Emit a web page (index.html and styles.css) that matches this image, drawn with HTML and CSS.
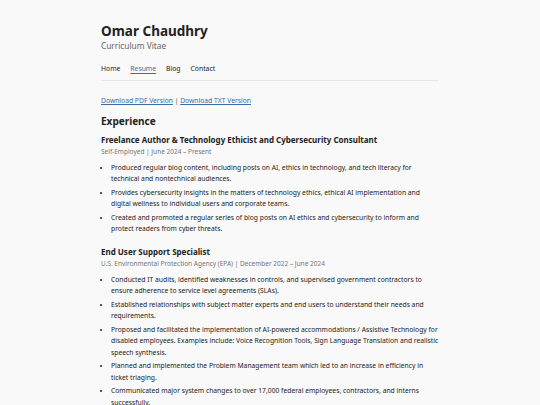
FILE: index.html
```html
<!DOCTYPE html>
<html lang="en">
<head>
    <meta charset="UTF-8">
    <meta name="viewport" content="width=device-width, initial-scale=1.0">
    <title>Resume - Omar Chaudhry</title>
    <link rel="stylesheet" href="styles.css">
</head>
<body>
    <div class="page">
        <header class="site-header">
            <h1 class="site-title">Omar Chaudhry</h1>
            <p class="site-subtitle">Curriculum Vitae</p>
            <nav class="site-nav">
                <a href="#">Home</a>
                <a href="#" class="active">Resume</a>
                <a href="#">Blog</a>
                <a href="#">Contact</a>
            </nav>
        </header>

        <main>
            <p class="downloads">
                <a href="#">Download PDF Version</a> <span class="sep">|</span> <a href="#">Download TXT Version</a>
            </p>

            <h2>Experience</h2>

            <section class="job">
                <h3>Freelance Author &amp; Technology Ethicist and Cybersecurity Consultant</h3>
                <p class="meta">Self-Employed | June 2024 – Present</p>
                <ul>
                    <li>Produced regular blog content, including posts on AI, ethics in technology, and tech literacy for technical and nontechnical audiences.</li>
                    <li>Provides cybersecurity insights in the matters of technology ethics, ethical AI implementation and digital wellness to individual users and corporate teams.</li>
                    <li>Created and promoted a regular series of blog posts on AI ethics and cybersecurity to inform and protect readers from cyber threats.</li>
                </ul>
            </section>

            <section class="job">
                <h3>End User Support Specialist</h3>
                <p class="meta">U.S. Environmental Protection Agency (EPA) | December 2022 – June 2024</p>
                <ul>
                    <li>Conducted IT audits, identified weaknesses in controls, and supervised government contractors to ensure adherence to service level agreements (SLAs).</li>
                    <li>Established relationships with subject matter experts and end users to understand their needs and requirements.</li>
                    <li>Proposed and facilitated the implementation of AI-powered accommodations / Assistive Technology for disabled employees. Examples include: Voice Recognition Tools, Sign Language Translation and realistic speech synthesis.</li>
                    <li>Planned and implemented the Problem Management team which led to an increase in efficiency in ticket triaging.</li>
                    <li>Communicated major system changes to over 17,000 federal employees, contractors, and interns successfully.</li>
                </ul>
            </section>
        </main>
    </div>
</body>
</html>
```

FILE: styles.css
```css
body {
    margin: 0;
    padding: 0;
    background-color: #f9f9f9;
    color: #222;
    font-family: "Noto Sans", sans-serif;
    font-size: 6.75px;
    line-height: 11.5px;
}

.page {
    max-width: 338px;
    margin: 0 auto;
    padding-top: 22px;
}

.site-title {
    font-size: 13.5px;
    line-height: 18px;
    margin: 0;
    color: #222;
}

.site-subtitle {
    font-size: 8.3px;
    line-height: 12px;
    color: #666;
    margin: 0;
}

.site-nav {
    display: flex;
    gap: 10px;
    font-size: 6.8px;
    line-height: 11px;
    margin-top: 10.5px;
    padding-bottom: 6px;
    border-bottom: 1px solid #e6e6e6;
}

.site-nav a {
    color: #222;
    text-decoration: none;
}

.site-nav a.active {
    color: #3a6ea5;
    text-decoration: underline;
    text-underline-offset: 2px;
}

a {
    color: #3a6ea5;
}

.downloads {
    margin: 14px 0 0;
    line-height: 11px;
}

.downloads .sep {
    color: #555;
}

h2 {
    font-size: 10px;
    line-height: 14px;
    margin: 8px 0 0;
}

.job h3 {
    font-size: 8px;
    line-height: 12px;
    margin: 6px 0 0;
}

.meta {
    font-size: 6.5px;
    line-height: 11px;
    color: #777;
    margin: 0;
}

.job ul {
    margin: 5px 0 0;
    padding-left: 10px;
}

.job li {
    margin-bottom: 2px;
}

.job + .job {
    margin-top: 11px;
}
```
